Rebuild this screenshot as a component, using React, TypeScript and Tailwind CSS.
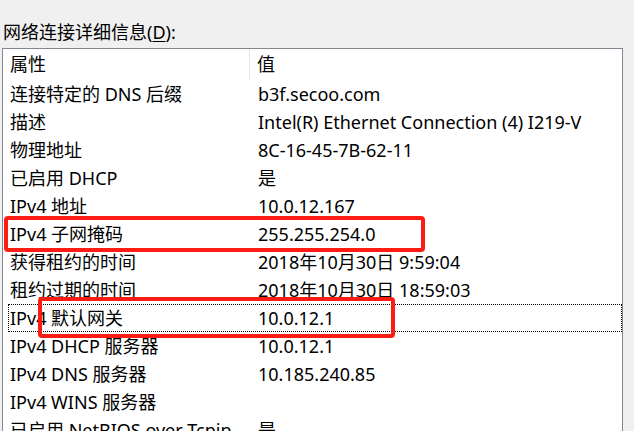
import React from "react";

const rows: [string, string][] = [
  ["连接特定的 DNS 后缀", "b3f.secoo.com"],
  ["描述", "Intel(R) Ethernet Connection (4) I219-V"],
  ["物理地址", "8C-16-45-7B-62-11"],
  ["已启用 DHCP", "是"],
  ["IPv4 地址", "10.0.12.167"],
  ["IPv4 子网掩码", "255.255.254.0"],
  ["获得租约的时间", "2018年10月30日 9:59:04"],
  ["租约过期的时间", "2018年10月30日 18:59:03"],
  ["IPv4 默认网关", "10.0.12.1"],
  ["IPv4 DHCP 服务器", "10.0.12.1"],
  ["IPv4 DNS 服务器", "10.185.240.85"],
  ["IPv4 WINS 服务器", ""],
  ["已启用 NetBIOS over Tcpip", "是"],
];

const FOCUSED = 8;

export default function App() {
  return (
    <div
      className="relative w-[634px] h-[431px] overflow-hidden bg-[#f0f0f0] text-black text-[18px]"
      style={{ fontFamily: '"Noto Sans", "Noto Sans CJK SC", sans-serif' }}
    >
      {/* 标签 */}
      <div className="h-[48px] pt-[21px] pl-[3px] leading-[22px]">
        网络连接详细信息(<span className="underline underline-offset-2">D</span>):
      </div>

      {/* 列表 */}
      <div className="ml-[2px] w-[621px] h-[383px] border border-b-0 border-[#828790] bg-white">
        <div className="flex h-[31px] items-center">
          <div className="w-[247px] h-full flex items-center pl-[7px] border-r border-[#e5e5e5]">属性</div>
          <div className="pl-[7px]">值</div>
        </div>
        {rows.map(([k, v], i) => (
          <div key={k} className="relative flex h-[28px] items-center whitespace-nowrap">
            <div className="w-[248px] pl-[7px]">{k}</div>
            <div className="pl-[7px]">{v}</div>
            {i === FOCUSED && (
              <span className="absolute left-[5px] right-0 top-0 bottom-0 border border-dotted border-black" />
            )}
          </div>
        ))}
      </div>

      {/* 红框标注 */}
      <div className="absolute left-[4px] top-[216px] w-[421px] h-[36px] border-4 border-[#fc1c14] rounded-[4px]" />
      <div className="absolute left-[38px] top-[297px] w-[357px] h-[41px] border-4 border-[#fc1c14] rounded-[4px]" />
    </div>
  );
}
